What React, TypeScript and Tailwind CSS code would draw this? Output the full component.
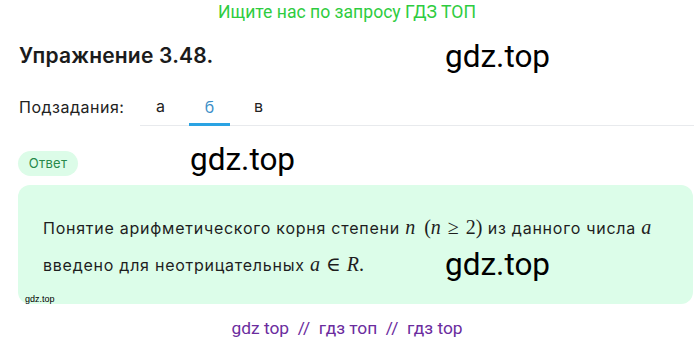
import React from "react";

const math = { fontFamily: '"Liberation Serif", "DejaVu Serif", serif' };
const roboto = { fontFamily: 'Roboto, sans-serif' };

export default function App() {
  return (
    <div className="relative w-[694px] h-[341px] bg-white overflow-hidden" style={{ fontFamily: 'Inter, "Noto Sans", sans-serif' }}>
      <div className="h-[25px] flex items-center justify-center text-[17.6px] text-[#2ecc40]" style={roboto}>
        Ищите нас по запросу ГДЗ ТОП
      </div>

      <div className="relative pl-[19px] pt-[16px] h-[62px]">
        <h1 className="text-[21px] font-semibold text-[#1b1b1b] leading-[30px] tracking-[0.2px]">Упражнение 3.48.</h1>
        <div className="absolute left-[445px] top-[14px] text-[31.5px] leading-[36px] text-black" style={roboto}>gdz.top</div>
      </div>

      <div className="flex items-end pl-[19px] h-[39px]">
        <div className="w-[121px] h-full flex items-center text-[16px] tracking-[0.5px] text-[#222]">Подзадания:</div>
        <div className="flex-1 flex gap-[8px] h-full border-b border-[#e8eaed]">
          <div className="w-[41px] flex items-center justify-center text-[16px] text-[#222]">а</div>
          <div className="w-[41px] flex items-center justify-center text-[16px] text-[#3d8fc8] border-b-[3px] border-[#2aa3e3] -mb-px pt-[3px]">б</div>
          <div className="w-[41px] flex items-center justify-center text-[16px] text-[#222]">в</div>
        </div>
      </div>

      <div className="relative pl-[18px] pt-[25px]">
        <div className="w-[60px] h-[25px] rounded-full bg-[#dcfce8] text-[#27894a] text-[13px] tracking-[0.3px] flex items-center justify-center">Ответ</div>
        <div className="absolute left-[190px] top-[16px] text-[31.5px] leading-[36px] text-black" style={roboto}>gdz.top</div>
      </div>

      <div className="relative ml-[18px] mt-[9px] w-[675px] h-[119px] rounded-[12px] bg-[#dcfde9] pl-[25px] pt-[24px]">
        <p className="text-[16px] leading-[36px] tracking-[0.75px] text-[#1e1e1e] whitespace-nowrap">
          Понятие арифметического корня степени <span className="italic text-[20px] tracking-normal" style={math}>n</span>
          <span className="text-[20px] tracking-normal ml-[9px]" style={math}>(<i>n</i><span className="mx-[7px]">≥</span>2)</span> из данного числа <span className="italic text-[20px] tracking-normal" style={math}>a</span>
          <br />
          введено для неотрицательных <span className="italic text-[20px] tracking-normal" style={math}>a</span><span className="text-[20px] tracking-normal ml-[6px]" style={math}><span className="mr-[6px]">∈</span><i>R</i>.</span>
        </p>
        <div className="absolute left-[427px] top-[62px] text-[31.5px] leading-[36px] text-black" style={roboto}>gdz.top</div>
        <div className="absolute left-[7px] top-[108px] text-[9px] leading-[12px] text-black" style={{ fontFamily: '"Liberation Sans", Arial, sans-serif' }}>gdz.top</div>
      </div>

      <div className="mt-[11px] text-center text-[17.4px] text-[#6b2c9e]" style={roboto}>
        gdz top &nbsp;//&nbsp; гдз топ &nbsp;//&nbsp; гдз top
      </div>
    </div>
  );
}
